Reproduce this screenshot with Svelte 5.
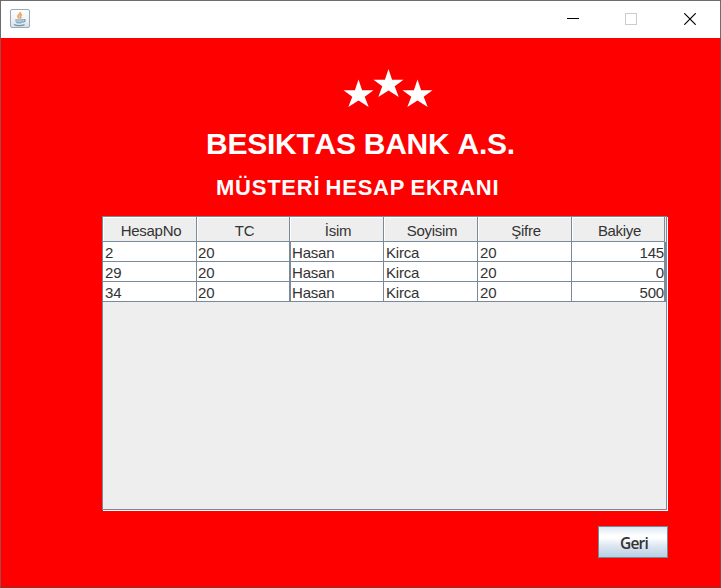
<script>
  const columns = ['HesapNo', 'TC', 'İsim', 'Soyisim', 'Şifre', 'Bakiye'];
  const rows = [
    ['2', '20', 'Hasan', 'Kirca', '20', '145'],
    ['29', '20', 'Hasan', 'Kirca', '20', '0'],
    ['34', '20', 'Hasan', 'Kirca', '20', '500']
  ];
</script>

<div class="window">
  <header class="titlebar">
    <svg class="java" width="20" height="20" viewBox="0 0 20 20">
      <defs>
        <linearGradient id="tile" x1="0" y1="0" x2="0" y2="1">
          <stop offset="0" stop-color="#ffffff" />
          <stop offset="0.5" stop-color="#f2f5f7" />
          <stop offset="1" stop-color="#d3e0e8" />
        </linearGradient>
      </defs>
      <rect x="0.5" y="0.5" width="19" height="18" rx="1.5" fill="url(#tile)" stroke="#9aa9b3" />
      <path d="M10.300 3c.7 2-3 2.700-2.300 4.600.2.700.8 1.200 1.400 1.800M12 5.400c-2 .9-2 1.700-1.300 2.600.4.600 0 1.100-.5 1.500" fill="none" stroke="#e9a565" stroke-width="1.700" />
      <path d="M5.200 10.200h8c0 2.800-1.200 4.300-2.700 4.300h-2.600c-1.500 0-2.700-1.500-2.700-4.300z" fill="#8fadc2" />
      <path d="M6.500 12h5.500" stroke="#dfe9ef" stroke-width=".8" />
      <path d="M13.300 10.700c2.700-.5 2.300 2-.6 2.400M4 15.500c2.500 1.500 8.500 1.400 10.500 0" fill="none" stroke="#6f93ad" stroke-width="1.200" />
    </svg>
    <div class="controls">
      <svg width="12" height="12" viewBox="0 0 12 12"><path d="M0 6.500h12" stroke="#000" /></svg>
      <svg width="12" height="12" viewBox="0 0 12 12"><rect x=".5" y=".5" width="11" height="11" fill="none" stroke="#ccc" /></svg>
      <svg width="12" height="12" viewBox="0 0 12 12"><path d="M.3.3l11.400 11.400M11.700.3L.3 11.700" stroke="#000" stroke-width="1.200" /></svg>
    </div>
  </header>

  <main>
    <svg class="stars" width="90" height="38" viewBox="0 0 90 38">
      <g fill="#fff">
        <path d="M45.500 0l3.600 10.700h11.400l-8.800 6.500 4 10.800-10.200-6.500-10.200 6.500 4-10.800-8.800-6.500h11.400z" />
        <path d="M15.500 10.500l3.600 10.700h11.400l-8.800 6.500 4 10.300-10.200-6.500-10.200 6.500 4-10.300-8.800-6.500h11.400z" />
        <path d="M74.500 10.500l3.600 10.700h11.400l-8.800 6.500 4 10.300-10.200-6.500-10.200 6.500 4-10.300-8.800-6.500h11.400z" />
      </g>
    </svg>
    <h1>BESIKTAS BANK A.S.</h1>
    <h2>MÜSTERİ HESAP EKRANI</h2>

    <div class="pane">
      <div class="grid head">
        {#each columns as name}
          <div>{name}</div>
        {/each}
      </div>
      {#each rows as row}
        <div class="grid row">
          {#each row as value}
            <div>{value}</div>
          {/each}
        </div>
      {/each}
    </div>

    <button>Geri</button>
  </main>
</div>

<style>
  .window {
    box-sizing: border-box;
    width: 721px;
    height: 588px;
    border: 1px solid #6e6c6c;
    border-left-color: #a54848;
    border-right-color: #8c4242;
    border-bottom-color: #7a3a3a;
    background: #f00;
    font-family: "Liberation Sans", Arial, sans-serif;
    color: #333;
  }
  .titlebar {
    display: flex;
    justify-content: space-between;
    height: 37px;
    margin: 0 -1px;
    border: solid #6e6c6c;
    border-width: 0 1px;
    box-sizing: border-box;
    background: #fff;
  }
  .java {
    margin: 8px 0 0 9px;
  }
  .controls {
    display: flex;
    gap: 46px;
    padding: 12px 24px 0 0;
  }
  .controls svg {
    display: block;
  }
  .controls svg:nth-child(2) {
    margin: 0 1px 0 -1px;
  }
  .controls svg:first-child {
    margin: -1px 1px 0 -1px;
  }
  main {
    display: flex;
    flex-direction: column;
  }
  .stars {
    margin: 31px 0 0 342px;
  }
  h1,
  h2 {
    margin: 0;
    color: #fff;
    font-weight: bold;
    white-space: nowrap;
    font-kerning: none;
  }
  h1 {
    margin: 19px 0 0 205px;
    font-size: 30px;
    line-height: 36px;
    letter-spacing: -0.25px;
  }
  h2 {
    margin: 13px 0 0 215px;
    font-size: 22px;
    line-height: 26px;
    letter-spacing: 0.75px;
    word-spacing: -1.5px;
  }
  .pane {
    box-sizing: border-box;
    width: 565px;
    height: 294px;
    margin: 15px 0 0 101px;
    border: 1px solid #7a8a99;
    background: #eee;
    box-shadow: 1px 1px 0 #fff;
    font-size: 15px;
    letter-spacing: -0.2px;
    white-space: nowrap;
  }
  .grid {
    display: grid;
    grid-template-columns: 94px 93px 94px 94px 94px 93px;
  }
  .grid div {
    box-sizing: border-box;
    border-right: 1px solid #7a8a99;
    border-bottom: 1px solid #7a8a99;
  }
  .head div {
    height: 25px;
    padding-left: 3px;
    line-height: 27px;
    text-align: center;
    letter-spacing: -0.3px;
    box-shadow: inset 1px 1px 0 #fff;
  }
  .row {
    background: #fff;
  }
  .row div {
    height: 20px;
    padding-left: 2px;
    line-height: 21px;
  }
  .row div:nth-child(2) {
    padding-left: 1px;
  }
  .row div:nth-child(3) {
    padding-left: 1px;
    border-left: 1px solid #7a8a99;
  }
  .row div:last-child {
    width: 94px;
    border-right-width: 2px;
    padding-right: 0;
    text-align: right;
  }
  button {
    width: 70px;
    height: 32px;
    margin: 16px 0 0 597px;
    padding: 1px 0 0 2px;
    border: 1px solid #7a8a99;
    border-radius: 0;
    background: linear-gradient(#dde8f3 0%, #fff 30%, #fff 36%, #dae5f0 65%, #b8cfe5 100%);
    color: #333;
    font: 600 15.5px/20px "Open Sans", "Noto Sans", sans-serif;
    letter-spacing: -0.8px;
  }
</style>
